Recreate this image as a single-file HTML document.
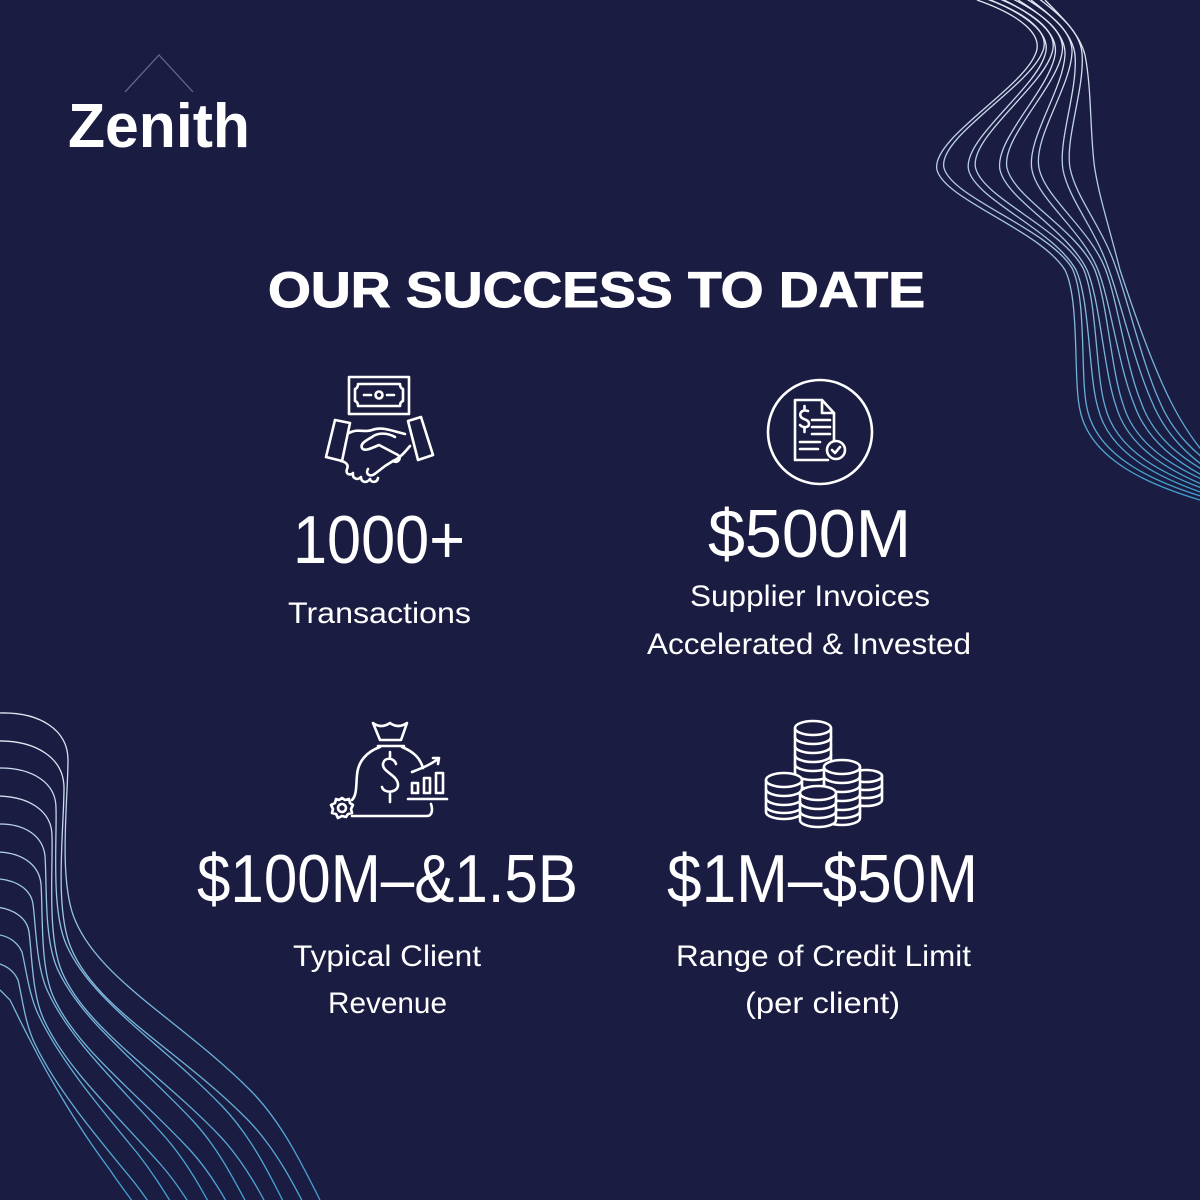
<!DOCTYPE html>
<html><head><meta charset="utf-8"><style>
html,body{margin:0;padding:0;background:#1b1c41;}
svg{display:block}
</style></head><body>
<svg width="1200" height="1200" viewBox="0 0 1200 1200" xmlns="http://www.w3.org/2000/svg">
<defs>
<linearGradient id="gw" x1="0" y1="0" x2="0" y2="500" gradientUnits="userSpaceOnUse">
<stop offset="0" stop-color="#e6e9f5"/><stop offset="0.5" stop-color="#9fc3e0"/><stop offset="1" stop-color="#3f9fd0"/></linearGradient>
<linearGradient id="gb" x1="0" y1="710" x2="0" y2="1200" gradientUnits="userSpaceOnUse">
<stop offset="0" stop-color="#e6e9f5"/><stop offset="0.45" stop-color="#8cc0e0"/><stop offset="1" stop-color="#3f9fd0"/></linearGradient>
<g id="tr">
<path d="M977,0 C1020,15 1045,35 1035,55 C1020,90 930,140 937,170 C945,200 1040,230 1065,270 C1080,300 1073,380 1080,410 C1090,460 1150,485 1200,500"/>
<path d="M990.6,0 C1029,16 1052,35 1045,55 C1034.4,90 962,140 968.6,170 C976,200 1054,230 1076,270 C1090,300 1088.4,376 1098,408 C1109,454 1160,478 1203,493"/>
<path d="M1004,0 C1038,17 1059,35 1055,55 C1049,90 994,140 1000,170 C1007,200 1068,230 1087,270 C1100,300 1104,372 1116,406 C1128,448 1170,471 1206,486"/>
<path d="M1018,0 C1047,18 1066,35 1065,55 C1063,90 1026,140 1032,170 C1038,200 1082,230 1098,270 C1110,300 1119,368 1134,404 C1147,442 1180,464 1209,479"/>
<path d="M1031,0 C1056,19 1073,35 1075,55 C1078,90 1058,140 1063,170 C1069,200 1096,230 1109,270 C1120,300 1135,364 1152,402 C1166,436 1190,457 1212,472"/>
</g>
<g id="bl">
<path d="M0,713 C40,712 68,730 68,760 C68,800 58,880 75,920 C100,980 180,1020 250,1090 C280,1120 300,1160 320,1200"/>
<path d="M0,768 C33,768 56,783 56,808 C57,842 51,909 66,944 C90,1000 160,1042 222,1106 C248,1133 266,1167 283,1201"/>
<path d="M0,824 C25,824 43,836 45,856 C47,884 44,938 57,968 C80,1020 140,1064 194,1122 C216,1146 231,1174 246,1202"/>
<path d="M0,879 C18,881 31,890 33,904 C36,926 36,967 48,992 C70,1040 120,1086 166,1138 C184,1159 197,1181 209,1203"/>
<path d="M0,935 C10,937 18,943 22,952 C26,968 29,996 39,1016 C60,1060 100,1108 138,1154 C152,1172 162,1188 172,1204"/>
</g>
</defs>
<rect width="1200" height="1200" fill="#1b1c41"/>
<g fill="none" stroke="url(#gw)" stroke-width="1.3">
<use href="#tr"/>
<use href="#tr" transform="translate(7,-2)"/>
<path d="M1045,0 C1065,20 1080,35 1085,55 C1092,90 1090,140 1095,170 C1100,200 1110,230 1120,270 C1130,300 1150,360 1170,400 C1185,430 1200,450 1215,465"/>
</g>
<g fill="none" stroke="url(#gb)" stroke-width="1.3">
<use href="#bl"/>
<use href="#bl" transform="translate(-4,28)"/>
<path d="M0,990 C3,993 6,996 10,1000 C15,1010 22,1025 30,1040 C50,1080 80,1130 110,1170 C120,1185 128,1195 135,1205"/>
</g>

<path d="M125,92 L159,55 L193,92" fill="none" stroke="#6a6c8a" stroke-width="1.2"/>
<text x="68" y="147" font-family="Liberation Sans, sans-serif" font-weight="bold" font-size="62" fill="#fff" textLength="182" lengthAdjust="spacingAndGlyphs">Zenith</text>

<text x="268" y="307" font-family="Liberation Sans, sans-serif" font-weight="bold" font-size="50" fill="#fff" stroke="#fff" stroke-width="1" textLength="657" lengthAdjust="spacingAndGlyphs">OUR SUCCESS TO DATE</text>

<g font-family="Liberation Sans, sans-serif" fill="#fff">
<text x="293" y="563" font-size="68" textLength="172" lengthAdjust="spacingAndGlyphs">1000+</text>
<text x="708" y="557" font-size="68" textLength="203" lengthAdjust="spacingAndGlyphs">$500M</text>
<text x="197" y="902" font-size="68" textLength="381" lengthAdjust="spacingAndGlyphs">$100M–&amp;1.5B</text>
<text x="667" y="902" font-size="68" textLength="311" lengthAdjust="spacingAndGlyphs">$1M–$50M</text>
<text x="288" y="623" font-size="30" textLength="183" lengthAdjust="spacingAndGlyphs">Transactions</text>
<text x="690" y="606" font-size="30" textLength="240" lengthAdjust="spacingAndGlyphs">Supplier Invoices</text>
<text x="647" y="654" font-size="30" textLength="324" lengthAdjust="spacingAndGlyphs">Accelerated &amp; Invested</text>
<text x="293" y="966" font-size="30" textLength="188" lengthAdjust="spacingAndGlyphs">Typical Client</text>
<text x="328" y="1013" font-size="30" textLength="119" lengthAdjust="spacingAndGlyphs">Revenue</text>
<text x="676" y="966" font-size="30" textLength="295" lengthAdjust="spacingAndGlyphs">Range of Credit Limit</text>
<text x="745" y="1013" font-size="30" textLength="155" lengthAdjust="spacingAndGlyphs">(per client)</text>
</g>

<g fill="none" stroke="#fff" stroke-width="2.6" stroke-linejoin="round" stroke-linecap="round">
<rect x="349" y="377" width="60" height="37"/>
<path d="M358,384 H400 Q400,388 403,389 V401 Q400,402 400,406 H358 Q358,402 355,401 V389 Q358,388 358,384 Z"/>
<circle cx="379" cy="395" r="3.5"/>
<path d="M364,395 H371 M387,395 H394"/>
<path d="M335,420 L350,423 L342,461 L326,457 Z"/>
<path d="M408,421 L421,417 L433,455 L418,460 Z"/>
<path d="M349,433 C358,428 364,433 372,430 C382,426 392,431 405,434"/>
<path d="M395,437 C388,433 378,432 372,437 C365,441 360,444 362,448 C364,452 372,448 379,445 L398,455 C402,458 398,464 393,461"/>
<path d="M410,446 C405,452 400,458 393,461 L385,466 L376,473 C370,478 365,474 368,469"/>
<path d="M341,461 C346,462 349,465 347,469 C345,474 350,476 353,473 C352,478 357,481 361,477 C361,482 366,484 370,479 C371,483 377,483 378,478"/>
</g>

<g fill="none" stroke="#fff" stroke-width="2.6" stroke-linejoin="round" stroke-linecap="round">
<circle cx="820" cy="432" r="52"/>
<path d="M828,460 H795 V400 H822 L834,413 V441"/>
<path d="M822,400 V413 H834"/>
<path d="M808,411 C801,409 799,414 801,417 C803,420 809,419 809,424 C809,428 803,428 800,425 M804.5,406 V410 M804.5,428 V432"/>
<path d="M812,420 H830 M812,427 H830 M812,434 H830 M800,442 H820 M800,449 H818"/>
<circle cx="836" cy="450" r="9"/>
<path d="M832,450 L835,453 L840,447"/>
</g>

<g fill="none" stroke="#fff" stroke-width="2.6" stroke-linejoin="round" stroke-linecap="round">
<path d="M373,723 Q381,729 390,723 Q398,729 407,723 L401,740 H380 Z"/>
<path d="M378,746 H404"/>
<path d="M380,747 C366,752 358,762 357,775 C356,785 357,795 352,800"/>
<path d="M402,747 C414,752 420,758 423,768"/>
<path d="M352,816 H427 C432,816 433,810 431,804"/>
<path d="M396,764 C394,757 384,757 383,764 C382,772 398,775 398,785 C398,793 384,794 382,787 M390,752 V757 M390,794 V802"/>
<path d="M412,783 H418 V793 H412 Z M424,778 H430 V793 H424 Z M436,773 H443 V793 H436 Z"/>
<path d="M408,799 H447"/>
<path d="M412,772 C422,768 430,765 438,759 M433,758 L439,758 L438,764"/>
<circle cx="342" cy="808" r="4"/>
<path d="M342,798 L345,800 L349,799 L350,803 L353,805 L351,809 L352,813 L348,814 L346,817 L342,816 L338,818 L336,814 L332,813 L333,809 L331,805 L335,803 L336,799 L339,800 Z"/>
</g>

<g stroke="#fff" stroke-width="2.6" stroke-linejoin="round" stroke-linecap="round" fill="#1b1c41">
<g>
<path d="M795,728 L795,790 A18 7 0 0 0 831,790 L831,728 Z"/>
<ellipse cx="813" cy="728" rx="18" ry="7"/>
<path fill="none" d="M795,737 A18 7 0 0 0 831,737 M795,746 A18 7 0 0 0 831,746 M795,755 A18 7 0 0 0 831,755 M795,764 A18 7 0 0 0 831,764 M795,773 A18 7 0 0 0 831,773 M795,782 A18 7 0 0 0 831,782"/>
</g>
<g>
<path d="M850,776 L850,800 A16 6 0 0 0 882,800 L882,776 Z"/>
<ellipse cx="866" cy="776" rx="16" ry="6"/>
<path fill="none" d="M850,784 A16 6 0 0 0 882,784 M850,792 A16 6 0 0 0 882,792"/>
</g>
<g>
<path d="M824,767 L824,818 A18 7 0 0 0 860,818 L860,767 Z"/>
<ellipse cx="842" cy="767" rx="18" ry="7"/>
<path fill="none" d="M824,776 A18 7 0 0 0 860,776 M824,785 A18 7 0 0 0 860,785 M824,794 A18 7 0 0 0 860,794 M824,803 A18 7 0 0 0 860,803 M824,811 A18 7 0 0 0 860,811"/>
</g>
<g>
<path d="M766,780 L766,812 A18 7 0 0 0 802,812 L802,780 Z"/>
<ellipse cx="784" cy="780" rx="18" ry="7"/>
<path fill="none" d="M766,789 A18 7 0 0 0 802,789 M766,798 A18 7 0 0 0 802,798 M766,806 A18 7 0 0 0 802,806"/>
</g>
<g>
<path d="M800,793 L800,820 A18 7 0 0 0 836,820 L836,793 Z"/>
<ellipse cx="818" cy="793" rx="18" ry="7"/>
<path fill="none" d="M800,802 A18 7 0 0 0 836,802 M800,811 A18 7 0 0 0 836,811"/>
</g>
</g>
</svg>
</body></html>
